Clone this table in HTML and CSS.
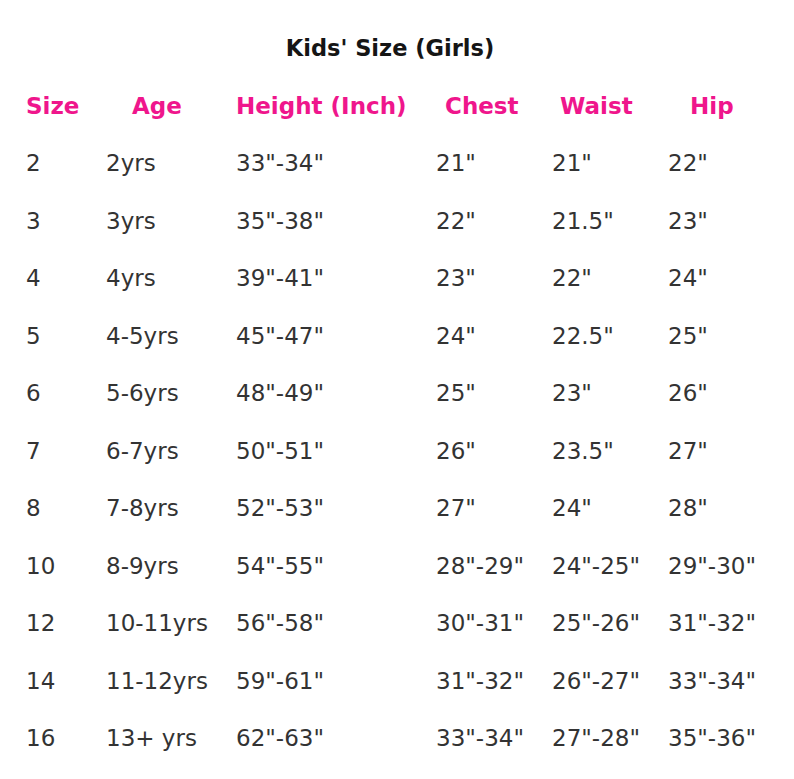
FILE: index.html
```html
<!DOCTYPE html>
<html>
<head>
<meta charset="utf-8">
<link rel="stylesheet" href="styles.css">
</head>
<body>
<div class="chart">
  <h1 class="title">Kids' Size (Girls)</h1>
  <div class="table">
    <div class="hd c-size">Size</div>
    <div class="hd c-age">Age</div>
    <div class="hd c-height">Height (Inch)</div>
    <div class="hd c-chest">Chest</div>
    <div class="hd c-waist">Waist</div>
    <div class="hd c-hip">Hip</div>

    <div>2</div><div>2yrs</div><div>33"-34"</div><div>21"</div><div>21"</div><div>22"</div>
    <div>3</div><div>3yrs</div><div>35"-38"</div><div>22"</div><div>21.5"</div><div>23"</div>
    <div>4</div><div>4yrs</div><div>39"-41"</div><div>23"</div><div>22"</div><div>24"</div>
    <div>5</div><div>4-5yrs</div><div>45"-47"</div><div>24"</div><div>22.5"</div><div>25"</div>
    <div>6</div><div>5-6yrs</div><div>48"-49"</div><div>25"</div><div>23"</div><div>26"</div>
    <div>7</div><div>6-7yrs</div><div>50"-51"</div><div>26"</div><div>23.5"</div><div>27"</div>
    <div>8</div><div>7-8yrs</div><div>52"-53"</div><div>27"</div><div>24"</div><div>28"</div>
    <div>10</div><div>8-9yrs</div><div>54"-55"</div><div>28"-29"</div><div>24"-25"</div><div>29"-30"</div>
    <div>12</div><div>10-11yrs</div><div>56"-58"</div><div>30"-31"</div><div>25"-26"</div><div>31"-32"</div>
    <div>14</div><div>11-12yrs</div><div>59"-61"</div><div>31"-32"</div><div>26"-27"</div><div>33"-34"</div>
    <div>16</div><div>13+ yrs</div><div>62"-63"</div><div>33"-34"</div><div>27"-28"</div><div>35"-36"</div>
  </div>
</div>
</body>
</html>
```

FILE: styles.css
```css
html, body {
  margin: 0;
  padding: 0;
  background: #ffffff;
}
.chart {
  width: 794px;
  height: 779px;
  overflow: hidden;
  font-family: "DejaVu Sans", Verdana, sans-serif;
}
.title {
  margin: 0;
  padding-top: 29px;
  height: 77.8px;
  box-sizing: border-box;
  line-height: 38px;
  text-align: center;
  font-size: 22.5px;
  font-weight: bold;
  color: #151515;
  width: 780px;
}
.table {
  display: grid;
  grid-template-columns: 80px 130px 200px 116px 116px 126px;
  grid-auto-rows: 57.5px;
  padding-left: 26px;
  font-size: 23px;
  line-height: 57.5px;
  color: #333333;
  white-space: nowrap;
}
.hd {
  color: #ef168c;
  font-weight: bold;
}
.c-age { padding-left: 26px; }
.c-chest { padding-left: 9px; }
.c-waist { padding-left: 8px; }
.c-hip { padding-left: 22px; }
```
